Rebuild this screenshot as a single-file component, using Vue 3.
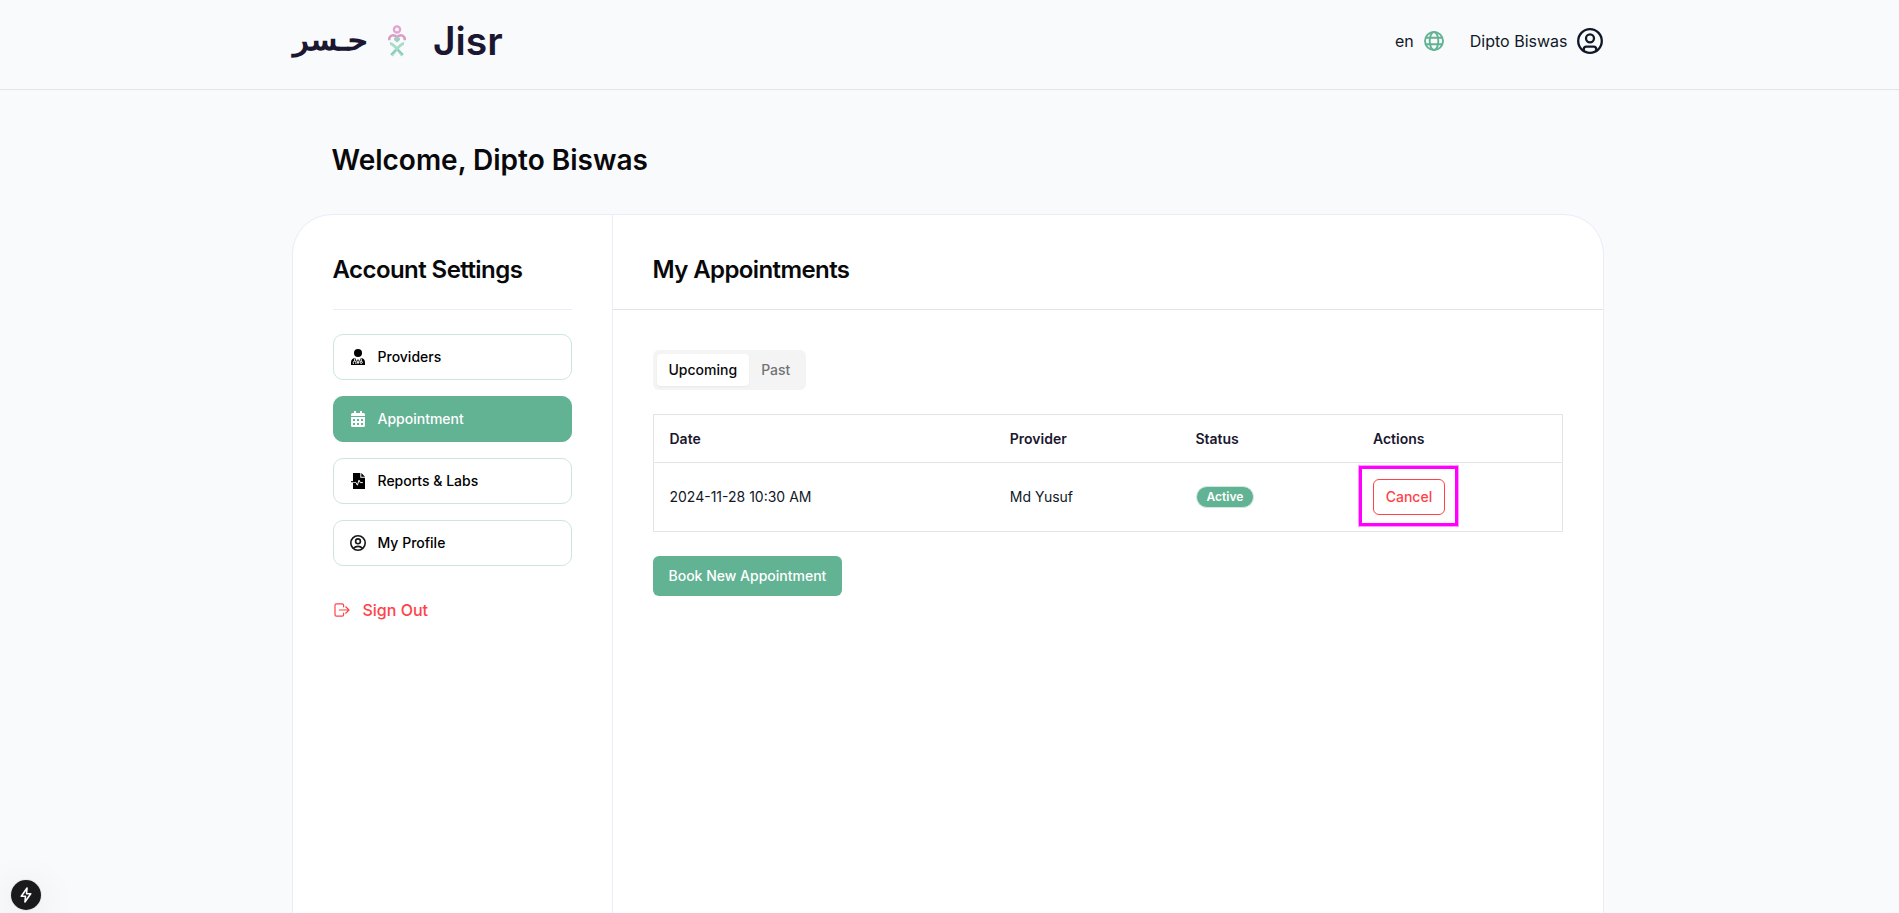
<script setup>
const items = [
  { label: 'Providers', icon: 'doctor' },
  { label: 'Appointment', icon: 'calendar', active: true },
  { label: 'Reports & Labs', icon: 'report' },
  { label: 'My Profile', icon: 'user' },
]
const appointments = [{ date: '2024-11-28 10:30 AM', provider: 'Md Yusuf', status: 'Active' }]
</script>

<template>
  <div class="page">
    <header class="header">
      <div class="bar">
        <div class="logo">
          <span class="logo-ar" lang="ar">حـسر</span>
          <svg class="mark" viewBox="0 0 18 32" fill="none">
            <circle cx="9" cy="4.4" r="3.1" stroke="#e3a3d3" stroke-width="2.3" />
            <path d="M1.2 15.2C1 10.5 5 8.6 9 12.2C13 8.6 17 10.5 16.8 15.2" stroke="#dd9bc8" stroke-width="2.6" />
            <path d="M6 13.2L9 11.2L12 13.2V15L9 17.5L6 15Z" fill="#a3cfc3" />
            <path d="M2 18.6Q5 18.2 14.5 30.5M16 18.6Q13 18.2 3.5 30.5" stroke="#a6dcc8" stroke-width="3" />
            <path d="M10 25l5 4.5M8 25l-5 4.5" stroke="#84cdb1" stroke-width="1.6" />
          </svg>
          <span class="logo-en">Jisr</span>
        </div>
        <nav class="tools">
          <span>en</span>
          <svg class="globe" viewBox="0 0 20 20" fill="none" stroke="#62b294" stroke-width="1.9">
            <circle cx="10" cy="10" r="9" />
            <ellipse cx="10" cy="10" rx="4.3" ry="9" />
            <path d="M1.8 6.7H18.2M1.8 13.3H18.2" />
          </svg>
          <span>Dipto Biswas</span>
          <svg class="avatar" viewBox="0 0 26 26" fill="none" stroke="#111827" stroke-width="2.3">
            <circle cx="13" cy="13" r="11.8" />
            <circle cx="13" cy="10.3" r="4" />
            <path d="M6.8 22.5V21.2Q6.8 18.6 9.4 18.6H16.6Q19.2 18.6 19.2 21.2V22.5" />
          </svg>
        </nav>
      </div>
    </header>

    <main class="wrap">
      <h1>Welcome, Dipto Biswas</h1>
      <div class="card">
        <aside class="side">
          <h2>Account Settings</h2>
          <div class="menu">
            <button v-for="item in items" :key="item.label" class="item" :class="{ active: item.active }">
              <svg v-if="item.icon === 'doctor'" viewBox="0 0 16 16">
                <circle cx="8" cy="4" r="4" fill="#000" />
                <path d="M1 16V13.5Q1 9.8 4.8 9.1L8 11L11.2 9.1Q15 9.8 15 13.5V16Z" fill="#000" />
                <path d="M4.7 9.5V12M3.3 15V13.4Q3.3 12.2 4.6 12.2Q5.9 12.2 5.9 13.4V15M11.2 9.5V12.3" fill="none" stroke="#fff" stroke-width="1" />
                <circle cx="11.2" cy="13.3" r="1.1" fill="none" stroke="#fff" stroke-width="1" />
                <path d="M6 9.3L8 14.6L10 9.3" fill="none" stroke="#fff" stroke-width="1" />
              </svg>
              <svg v-else-if="item.icon === 'calendar'" viewBox="0 0 16 16" fill="#fff">
                <path fill-rule="evenodd" d="M4 0h2v2h4V0h2v2h1.5Q15 2 15 3.5V5H1V3.5Q1 2 2.5 2H4ZM1 6h14v8.5Q15 16 13.5 16h-11Q1 16 1 14.5ZM3 8v2h2V8ZM7 8v2h2V8ZM11 8v2h2V8ZM3 12v2h2v-2ZM7 12v2h2v-2ZM11 12v2h2v-2Z" />
              </svg>
              <svg v-else-if="item.icon === 'report'" viewBox="0 0 16 16">
                <path d="M3 0h7.3v4.7H15V16H3ZM11.3 0L15 3.7H11.3Z" fill="#000" />
                <path d="M3 9.4H5.8L7.4 12.2L9 7.2L10.3 9.6H12.8" fill="none" stroke="#fff" stroke-width="1" />
                <path d="M1 8.7H5" stroke="#000" stroke-width="1.1" />
              </svg>
              <svg v-else viewBox="0 0 16 16" fill="none" stroke="#18181b" stroke-width="1.6">
                <circle cx="8" cy="8" r="7.2" />
                <circle cx="8" cy="6.3" r="2.4" />
                <path d="M3.5 13.2Q5.2 11.4 8 11.4Q10.8 11.4 12.5 13.2" />
              </svg>
              <span>{{ item.label }}</span>
            </button>
          </div>
          <a class="signout">
            <svg viewBox="0 0 16 14" fill="none" stroke="#ff4248" stroke-width="1.2" stroke-linejoin="round" stroke-linecap="round">
              <path d="M9.6 3.8V2.2Q9.6 .8 8.2 .8H2.4Q1 .8 1 2.2V11.8Q1 13.2 2.4 13.2H8.2Q9.6 13.2 9.6 11.8V10.2" />
              <path d="M5.3 7H15M11.7 3.8L15 7L11.7 10.2" />
            </svg>
            <span>Sign Out</span>
          </a>
        </aside>

        <section class="main">
          <div class="title"><h2>My Appointments</h2></div>
          <div class="content">
            <div class="tabs">
              <button class="tab on">Upcoming</button>
              <button class="tab">Past</button>
            </div>
            <div class="table">
              <div class="row head">
                <span>Date</span><span>Provider</span><span>Status</span><span>Actions</span>
              </div>
              <div v-for="a in appointments" :key="a.date" class="row body">
                <span>{{ a.date }}</span>
                <span>{{ a.provider }}</span>
                <span><b class="badge">{{ a.status }}</b></span>
                <span class="action"><button class="cancel">Cancel</button><i class="marker"></i></span>
              </div>
            </div>
            <button class="book">Book New Appointment</button>
          </div>
        </section>
      </div>
    </main>

    <div class="dev">
      <svg viewBox="0 0 16 20" fill="none" stroke="#fff" stroke-width="1.8" stroke-linejoin="round">
        <path d="M9.2 2L2.6 11.5H7.4L6.8 18L13.4 8.5H8.6Z" />
      </svg>
    </div>
  </div>
</template>

<style>
html, body { background: #f9fafc; overflow: hidden; }
</style>

<style scoped>
* { box-sizing: border-box; }
.page { height: 913px; overflow: hidden; background: #f9fafc; font-family: Inter, "Liberation Sans", sans-serif; font-size: 14px; line-height: 20px; color: #09090b; }
button { font: inherit; font-weight: 500; margin: 0; border: 0; cursor: pointer; }
h1, h2 { margin: 0; font-weight: 600; }
.header { height: 90px; border-bottom: 1px solid #e4e4e7; }
.bar { width: 1312px; margin-left: 291.5px; height: 82px; display: flex; justify-content: space-between; align-items: center; }
.logo { display: flex; align-items: center; height: 82px; color: #1b1730; }
.logo-ar { width: 76px; padding: 0 0 1px 1px; font-family: "DejaVu Sans", sans-serif; font-weight: 400; font-size: 28px; line-height: 40px; white-space: nowrap; -webkit-text-stroke: 1.4px #1b1730; transform: scaleX(1.13); transform-origin: left center; }
.mark { width: 18px; height: 32px; margin-left: 20px; }
.logo-en { margin-left: 27.5px; font-size: 39px; line-height: 48px; font-weight: 600; }
.tools { display: flex; align-items: center; font-size: 16px; line-height: 24px; color: #111827; }
.globe { width: 20px; height: 20px; margin: 0 25.5px 0 10.5px; }
.avatar { width: 26px; height: 26px; margin: 0 .5px 0 9.5px; }
.wrap { width: 1312px; margin-left: 291.5px; }
h1 { padding: 52px 0 36px 40px; font-size: 28px; line-height: 36px; }
.card { height: 800px; display: flex; background: #fff; border: 1px solid #ebebfa; border-radius: 40px; }
h2 { font-size: 24px; line-height: 32px; letter-spacing: -.6px; }
.side { width: 320px; flex: none; padding: 0 40px; border-right: 1px solid #ebebfa; }
.side h2 { height: 95px; padding-top: 39px; border-bottom: 1px solid #ebebfa; letter-spacing: -.56px; }
.menu { display: flex; flex-direction: column; gap: 16px; padding-top: 24px; }
.item { height: 46px; display: flex; align-items: center; gap: 12px; padding: 0 16px; background: #fff; border: 1px solid #cce6dc; border-radius: 10px; color: #000; }
.item svg { width: 16px; height: 16px; }
.item.active { background: #62b294; border-color: #62b294; color: #fff; }
.signout { display: flex; align-items: center; gap: 13px; margin-top: 32px; padding-left: 1px; font-size: 16px; line-height: 24px; font-weight: 500; color: #ff4248; }
.signout svg { width: 16px; height: 14px; }
.main { flex: 1; }
.title { height: 95px; padding: 39px 40px 0; border-bottom: 1px solid #e4e4e7; }
.content { padding: 40px; }
.tabs { width: 153px; height: 40px; display: flex; padding: 4px; background: #f4f4f5; border-radius: 6px; }
.tab { padding: 0 12px; background: none; border-radius: 4px; color: #737373; }
.tab.on { background: #fff; color: #09090b; box-shadow: 0 1px 2px #0000000d; }
.table { margin-top: 24px; border: 1px solid #e4e4e7; }
.row { display: grid; grid-template-columns: 340.3px 185.6px 177.6px 1fr; align-items: center; padding-left: 16px; color: #111827; }
.head { height: 48px; border-bottom: 1px solid #e4e4e7; font-weight: 600; color: #1b1730; }
.body { height: 68px; }
.badge { display: block; width: 58px; height: 22px; margin-left: .6px; border: 1px solid #d0e8df; border-radius: 11px; background: #62b294; color: #fff; font-size: 12px; line-height: 20px; font-weight: 600; text-align: center; }
.action { position: relative; }
.cancel { display: block; width: 72px; height: 36px; padding: 0; background: #fff; border: 1px solid #ff4248; border-radius: 6px; color: #ff4248; }
.marker { position: absolute; left: -14px; top: -13px; width: 99px; height: 60px; border: 3px solid #ff00ff; outline: 1px solid #ff00ff66; pointer-events: none; }
.book { height: 40px; margin-top: 24px; padding: 0 16px; background: #62b294; color: #fff; border-radius: 6px; }
.dev { position: fixed; left: 11px; top: 880px; width: 30px; height: 30px; display: flex; align-items: center; justify-content: center; border-radius: 50%; background: #1a1a1c; box-shadow: 0 0 0 1px #e8e8e8, 0 6px 40px #0000001c; }
.dev svg { width: 14px; height: 18px; }
</style>
